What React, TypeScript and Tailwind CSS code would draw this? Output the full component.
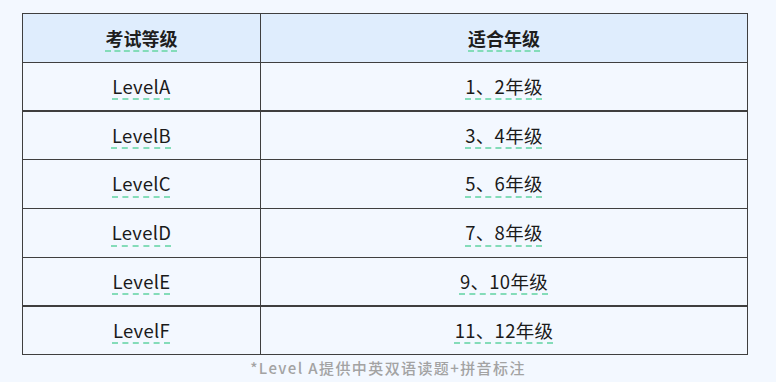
import React from "react";

const rows = [
  { a: "LevelA", b: "1、2年级", h: "h-[49px]", border: "border-b-2" },
  { a: "LevelB", b: "3、4年级", h: "h-[48px]", border: "border-b" },
  { a: "LevelC", b: "5、6年级", h: "h-[49px]", border: "border-b" },
  { a: "LevelD", b: "7、8年级", h: "h-[49px]", border: "border-b" },
  { a: "LevelE", b: "9、10年级", h: "h-[49px]", border: "border-b-2" },
  { a: "LevelF", b: "11、12年级", h: "h-[48px]", border: "border-b" },
];

const font = { fontFamily: '"Noto Sans CJK SC", "Noto Sans", sans-serif' };

function U({ children, bold }: { children: React.ReactNode; bold?: boolean }) {
  return (
    <span
      className={`underline decoration-dashed decoration-[#84dcb9] decoration-[1.5px] underline-offset-[5px] ${bold ? "font-bold text-[#1e1e1e]" : "text-[#1a1a1a]"}`}
    >
      {children}
    </span>
  );
}

export default function App() {
  return (
    <div className="w-[776px] h-[382px] bg-[#f3f8ff] pt-[13px] px-[22px]" style={font}>
      <div className="w-[726px] border-t border-x border-[#3f3f3f]">
        <div className="flex h-[49px] bg-[#dfedfd] border-b border-[#3f3f3f] text-[18px]">
          <div className="w-[238px] flex items-center justify-center border-r border-[#3f3f3f]">
            <U bold>考试等级</U>
          </div>
          <div className="flex-1 flex items-center justify-center">
            <U bold>适合年级</U>
          </div>
        </div>
        {rows.map((r) => (
          <div key={r.a} className={`flex ${r.h} ${r.border} border-[#3f3f3f] text-[18.5px] tracking-[0.3px]`}>
            <div className="w-[238px] flex items-center justify-center border-r border-[#3f3f3f]">
              <U>{r.a}</U>
            </div>
            <div className="flex-1 flex items-center justify-center">
              <U>{r.b}</U>
            </div>
          </div>
        ))}
      </div>
      <div className="h-[27px] flex items-center justify-center text-[15px] text-[#a3a3a3] font-medium tracking-[1.4px]">
        *Level A提供中英双语读题+拼音标注
      </div>
    </div>
  );
}
